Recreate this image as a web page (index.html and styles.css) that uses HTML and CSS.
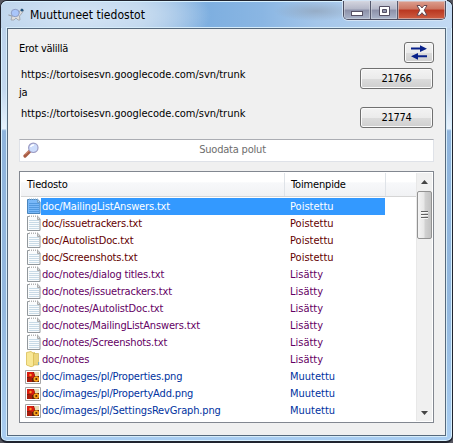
FILE: index.html
```html
<!DOCTYPE html>
<html lang="fi">
<head>
<meta charset="utf-8">
<title>Muuttuneet tiedostot</title>
<link rel="stylesheet" href="styles.css">
</head>
<body>
<svg class="defs" width="0" height="0">
  <symbol id="txt" viewBox="0 0 14 16">
    <path d="M.5 1.5H11L13 4V15.5H.5Z" fill="#fafcfd" stroke="#92989c"/>
    <path d="M10.5 1.5V4.5H13" fill="#ddd" stroke="#999" stroke-width=".8"/>
    <path d="M2 1.2H10.5" stroke="#fff" stroke-width="2"/>
    <path d="M2.5 2V.5M4.5 2V.5M6.5 2V.5M8.5 2V.5M10.5 2V.5" stroke="#aaa" stroke-width=".9"/>
    <path d="M2 5.5H12M2 7.5H12M2 9.5H12M2 11.5H12M2 13.5H12" stroke="#c8dae6"/>
  </symbol>
  <symbol id="txtsel" viewBox="0 0 14 16">
    <path d="M.5 1.5H11L13 4V15.5H.5Z" fill="#79b8f8" stroke="#4b85bb"/>
    <path d="M10.5 1.5V4.5H13" fill="#a6cff6" stroke="#6594bd" stroke-width=".8"/>
    <path d="M2.5 2V.5M4.5 2V.5M6.5 2V.5M8.5 2V.5M10.5 2V.5" stroke="#7faed8" stroke-width=".9"/>
    <path d="M2 5.5H12M2 7.5H12M2 9.5H12M2 11.5H12M2 13.5H12" stroke="#5299df"/>
  </symbol>
  <symbol id="png" viewBox="0 0 16 14">
    <path d="M.5.5H15.5V13.5H.5Z" fill="#fff" stroke="#a5a5a5"/>
    <path d="M2 2H14V12H2Z" fill="#642009"/>
    <path d="M9 2H14V6H10Z" fill="#e9dcb4"/>
    <path d="M2 2H8L10 5 8 8 2 7Z" fill="#d81c10"/>
    <circle cx="5.5" cy="5" r="1.2" fill="#ff9a28"/>
    <path d="M2 8H7V12H2Z" fill="#a91c0b"/>
    <circle cx="11.3" cy="9" r="2.8" fill="#f8a51b"/>
    <circle cx="11.3" cy="9" r="1.1" fill="#5c2508"/>
  </symbol>
</svg>
<div class="window">
  <div class="titlebar">
    <svg class="turtle" width="16" height="14" viewBox="0 0 16 14">
      <path d="M.5 7L4 8 3 12H6L8 10 10 12H12L11.5 8 14 5 15.5 2.5 14 .8 12 2.5 10.5 6 4 8Z" fill="#ddd" stroke="#9c9ea6" stroke-width=".8"/>
      <ellipse cx="7.2" cy="5" rx="4" ry="3.7" fill="#a9c5fa" stroke="#8997bd" stroke-width=".9"/>
      <circle cx="14" cy="2.2" r="1.4" fill="#23557f"/>
    </svg>
    <span class="t title">Muuttuneet tiedostot</span>
    <div class="caption">
      <span class="cap"><svg width="12" height="5"><rect x=".5" y=".5" width="11" height="4" fill="#fff" stroke="#555064"/></svg></span>
      <span class="cap max"><svg width="11" height="10"><path d="M.5.5H10.5V9.5H.5ZM3.5 3.5V6.5H7.5V3.5Z" fill="#fff" fill-rule="evenodd" stroke="#555064"/></svg></span>
      <span class="cap close"><svg width="12" height="11"><path d="M1 .5H4L6 3 8 .5H11L8.2 5.2 11 10.2H8L6 7.7 4 10.2H1L3.8 5.2Z" fill="#fff" stroke="#674851"/></svg></span>
    </div>
  </div>
  <div class="client">
    <div class="top">
      <div class="labels">
        <span class="t erot">Erot välillä</span>
        <span class="t url">https://tortoisesvn.googlecode.com/svn/trunk</span>
        <span class="t ja">ja</span>
        <span class="t url">https://tortoisesvn.googlecode.com/svn/trunk</span>
      </div>
      <div class="buttons">
        <button class="btn swap"><svg width="16" height="15" viewBox="0 0 16 15"><path d="M0 2.5H9V.3L16 3.7 9 7V4.5H0ZM16 10.3H7V8L0 11.3 7 14.7V12.3H16Z" fill="#08218a"/></svg></button>
        <button class="btn rev first"><span class="t">21766</span></button>
        <button class="btn rev"><span class="t">21774</span></button>
      </div>
    </div>
    <div class="filter">
      <svg width="17" height="17" viewBox="0 0 17 17"><path d="M6.5 9.5L2 14" stroke="#a85c43" stroke-width="3.2" stroke-linecap="round"/><path d="M5.5 9L2 12.5" stroke="#e6a58e"/><circle cx="10.3" cy="5.8" r="4.7" fill="#cdddfc" stroke="#9c9cc4" stroke-width="1.2"/><path d="M7.5 5Q8.5 2.5 11 3" stroke="#fff" stroke-width="1.5" fill="none"/></svg>
      <span class="t hint">Suodata polut</span>
    </div>
    <div class="list">
      <div class="table">
        <div class="head"><span class="hc c1"><span class="t">Tiedosto</span></span><span class="hc c2"><span class="t">Toimenpide</span></span></div>
        <div class="row sel"><svg class="ic"><use href="#txtsel"/></svg><span class="name"><span class="t">doc/MailingListAnswers.txt</span></span><span class="act"><span class="t">Poistettu</span></span></div>
        <div class="row del"><svg class="ic"><use href="#txt"/></svg><span class="name"><span class="t">doc/issuetrackers.txt</span></span><span class="act"><span class="t">Poistettu</span></span></div>
        <div class="row del"><svg class="ic"><use href="#txt"/></svg><span class="name"><span class="t">doc/AutolistDoc.txt</span></span><span class="act"><span class="t">Poistettu</span></span></div>
        <div class="row del"><svg class="ic"><use href="#txt"/></svg><span class="name"><span class="t">doc/Screenshots.txt</span></span><span class="act"><span class="t">Poistettu</span></span></div>
        <div class="row add"><svg class="ic"><use href="#txt"/></svg><span class="name"><span class="t">doc/notes/dialog titles.txt</span></span><span class="act"><span class="t">Lisätty</span></span></div>
        <div class="row add"><svg class="ic"><use href="#txt"/></svg><span class="name"><span class="t">doc/notes/issuetrackers.txt</span></span><span class="act"><span class="t">Lisätty</span></span></div>
        <div class="row add"><svg class="ic"><use href="#txt"/></svg><span class="name"><span class="t">doc/notes/AutolistDoc.txt</span></span><span class="act"><span class="t">Lisätty</span></span></div>
        <div class="row add"><svg class="ic"><use href="#txt"/></svg><span class="name"><span class="t">doc/notes/MailingListAnswers.txt</span></span><span class="act"><span class="t">Lisätty</span></span></div>
        <div class="row add"><svg class="ic"><use href="#txt"/></svg><span class="name"><span class="t">doc/notes/Screenshots.txt</span></span><span class="act"><span class="t">Lisätty</span></span></div>
        <div class="row add"><svg class="ic folder" viewBox="0 0 14 16"><path d="M4 2L9 1V14L4 15Z" fill="#e7cc68"/><path d="M7 2.5H12.5V14H7Z" fill="#edd67c" stroke="#cfb65a" stroke-width=".7"/><path d="M.5 1.5L5 .5 7.5 2.5V15L5 15.7.5 14Z" fill="#f8e795" stroke="#d9bd55" stroke-width=".8"/><path d="M12.7 11V14" stroke="#69a9d0"/></svg><span class="name"><span class="t">doc/notes</span></span><span class="act"><span class="t">Lisätty</span></span></div>
        <div class="row mod"><svg class="ic img"><use href="#png"/></svg><span class="name"><span class="t">doc/images/pl/Properties.png</span></span><span class="act"><span class="t">Muutettu</span></span></div>
        <div class="row mod"><svg class="ic img"><use href="#png"/></svg><span class="name"><span class="t">doc/images/pl/PropertyAdd.png</span></span><span class="act"><span class="t">Muutettu</span></span></div>
        <div class="row mod"><svg class="ic img"><use href="#png"/></svg><span class="name"><span class="t">doc/images/pl/SettingsRevGraph.png</span></span><span class="act"><span class="t">Muutettu</span></span></div>
        <div class="row mod"><svg class="ic img"><use href="#png"/></svg></div>
      </div>
      <div class="scroll">
        <svg class="arrow" width="7" height="4"><path d="M0 4L3.5 0 7 4Z" fill="#444"/></svg>
        <div class="thumb"><i></i><i></i><i></i></div>
        <svg class="arrow down" width="7" height="4"><path d="M0 0L3.5 4 7 0Z" fill="#444"/></svg>
      </div>
    </div>
  </div>
</div>
</body>
</html>
```
FILE: styles.css
```css
* { box-sizing: border-box; }
body { margin: 0; width: 453px; height: 443px; overflow: hidden; background: #55565f; font: 11px/17px "DejaVu Sans Condensed", "DejaVu Sans", sans-serif; font-stretch: condensed; color: #000; }
.defs { position: absolute; }
.t { display: inline-block; white-space: nowrap; letter-spacing: -.16px; }
.window { width: 453px; height: 443px; border: 1px solid #20242f; border-bottom-width: 2px; border-radius: 7px; padding: 0 6px 5px; box-shadow: inset 0 0 0 1px #d8f1ff; background: linear-gradient(180deg, #b9d0ea 0, #c3d8ef 20%, #e6f1fc 29%, #8fb4dc 29.5%, #94b8de 70%, #a9cdf1 100%); display: flex; flex-direction: column; }
.titlebar { height: 28px; margin: 0 -6px; padding-left: 7px; display: flex; border-radius: 6px 6px 0 0; background: radial-gradient(ellipse 130px 40px at 80px 14px, #d5e5f5 0, #c5daef 50%, transparent 100%), radial-gradient(ellipse 42px 10px at 315px 10px, #8d9caf99 0, transparent 100%), linear-gradient(90deg, #b4cde7 0, #a9c8e8 30%, #7eafe0 46%, #8ab6e3 58%, #a4c6ea 70%, #c3daf3 100%); box-shadow: inset 0 1px #d8f1ff; }
.turtle { margin-top: 7px; }
.title { font-size: 12px; margin: 6px 0 0 6px; letter-spacing: .04px; }
.caption { margin: 0 6px 0 auto; height: 19px; display: flex; border: 1px solid #4c4d60; border-top: 0; border-radius: 0 0 5px 5px; overflow: hidden; box-shadow: 0 0 0 1px #d4e4f5; }
.cap { width: 27px; display: flex; align-items: center; justify-content: center; background: linear-gradient(#d4d5df 0, #b4b7c8 45%, #8c90a8 50%, #aab4ca 100%); border-right: 1px solid #55586c; box-shadow: inset 0 0 0 1px #d5d9e188; }
.cap svg { margin-top: 1px; }
.cap:first-child svg { margin-top: 6px; }
.close { width: 47px; border: 0; background: linear-gradient(#dda090 0, #cc7460 45%, #b93620 50%, #ce5e43 100%); }
.client { flex: 1; border: 1px solid #56697c; box-shadow: 0 0 0 1px #d6ecfa; background: #f0f0f0; margin-top: 0; padding: 11px 11px 12px; display: flex; flex-direction: column; }
.top { display: flex; justify-content: space-between; height: 99px; }
.labels { display: flex; flex-direction: column; align-items: flex-start; }
.erot { margin-top: 0; letter-spacing: -.25px; }
.url { margin: 9px 0 0 2px; letter-spacing: -.03px; }
.ja { margin-top: 1px; }
.ja + .url { margin-top: 4px; }
.buttons { display: flex; flex-direction: column; align-items: flex-end; padding: 2px 1px 0 0; }
.btn { padding: 0; height: 21px; display: flex; align-items: center; justify-content: center; border: 1px solid #707070; border-radius: 3px; font: inherit; background: linear-gradient(#f3f3f3 0, #ebebeb 50%, #dcdcdc 51%, #cfcfcf 100%); box-shadow: inset 0 0 0 1px #fafafa; }
.swap { width: 30px; margin-right: -1px; }
.rev { width: 73px; margin-top: 18px; }
.rev .t { letter-spacing: -.3px; }
.first { margin-top: 5px; }
.filter { height: 23px; background: #fff; border: 1px solid #dfe2e8; border-top-color: #abadb3; display: flex; align-items: center; padding-left: 3px; }
.hint { flex: 1; text-align: center; color: #6d6d6d; padding: 0 8px 2px 0; letter-spacing: -.2px; }
.list { height: 252px; margin-top: 9px; background: #fff; border: 1px solid #828790; padding: 1px; display: flex; overflow: hidden; }
.table { width: 396px; height: 248px; overflow: hidden; }
.head { height: 24px; display: flex; border-bottom: 1px solid #d5d5d5; background: linear-gradient(#fff 0, #fff 40%, #f7f8fa 42%, #f1f2f4 100%); margin-bottom: 1px; }
.hc { display: block; height: 23px; line-height: 24px; border-right: 1px solid #dfe3e8; }
.c1 { width: 264px; padding-left: 6px; }
.c2 { width: 101px; padding-left: 6px; }
.row { height: 17px; display: flex; }
.ic { width: 14px; height: 16px; margin: 0 0 0 6px; flex: none; overflow: visible; }
.img { width: 16px; height: 14px; margin: 2px 0 0 4px; }
.folder { margin: 0 1px 0 5px; }
.name { width: 243px; padding-left: 1px; }
.act { width: 101px; padding-left: 6px; }
.act .t { letter-spacing: 0; }
.sel { color: #fff; }
.sel .name, .sel .act { background: #3399ff; }
.del { color: #640000; }
.add { color: #640064; }
.mod { color: #0032a0; }
.scroll { width: 16px; background: #f0f0f0; border-left: 1px solid #e8e8e8; display: flex; flex-direction: column; align-items: center; padding: 7px 0 6px; }
.thumb { width: 15px; height: 48px; margin-top: 7px; border: 1px solid #929292; border-radius: 2px; background: linear-gradient(90deg, #f4f4f4 0, #e6e6e6 48%, #d2d2d2 52%, #c2c2c2 100%); display: flex; flex-direction: column; align-items: center; justify-content: center; gap: 1px; }
.thumb i { width: 7px; height: 2px; background: #626262; border-bottom: 1px solid #f8f8f8; }
.down { margin-top: auto; }
```
